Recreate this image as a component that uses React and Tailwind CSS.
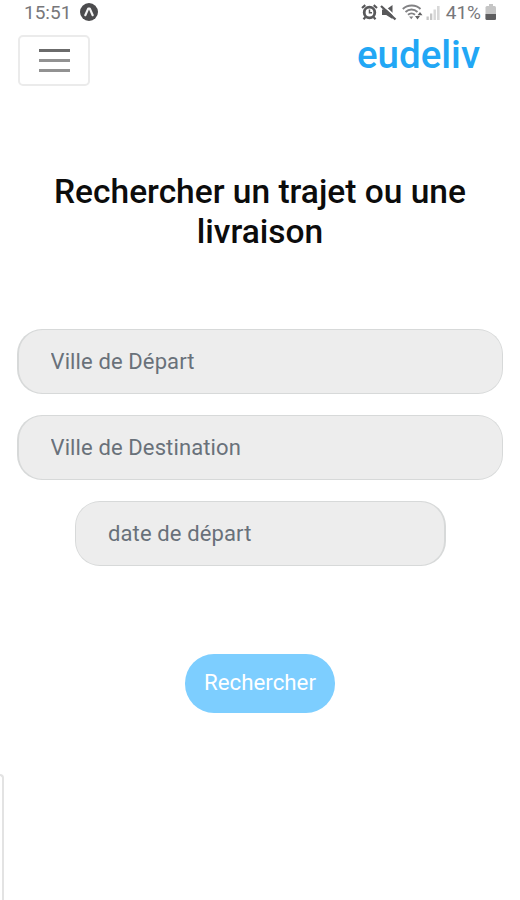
function ExpoIcon() {
  return (
    <svg width="20" height="20" viewBox="0 0 20 20" className="mb-px ml-2">
      <circle cx="10" cy="10" r="9" fill="#4b4b4d" />
      <path d="M6.3 13.2 9.2 6.6h1.6l2.9 6.6" fill="none" stroke="#f3f3f3" strokeWidth="2.2" strokeLinecap="round" strokeLinejoin="round" />
    </svg>
  );
}

function StatusIcons() {
  return (
    <svg width="82" height="18" viewBox="0 0 82 18" fill="none" className="mb-[2px]">
      <g stroke="#58585a">
        <circle cx="9.5" cy="9.5" r="5.3" strokeWidth="2.8" />
        <path d="M2 5 5.3 2.2M17 5l-3.3-2.8M5.5 14l-2 2.2M13.5 14l2 2.2" strokeWidth="2.2" />
        <path d="M9.5 6.5v3.3H12" strokeWidth="1.5" />
      </g>
      <path d="M22 6.5h4.2L32.5 2v14l-6.3-4H22z" fill="#58585a" />
      <path d="M23 2.2 37 15" stroke="#fff" strokeWidth="1.8" />
      <path d="M21 3 35.5 16.5" stroke="#58585a" strokeWidth="2.3" />
      <g stroke="#828284" strokeWidth="1.9">
        <path d="M42.8 6C47.5 1.3 56 1.3 60.5 6" />
        <path d="M45.5 9C49 5.7 54 5.7 57.5 9" />
        <path d="M48 11.8c2-1.8 5-1.8 7 0" />
      </g>
      <path d="m49 13.5 2.3 2.8 2-2.8z" fill="#828284" />
      <path d="m60 9 2.5 3.2h-5zM55 13h5l-2.5 3.4z" fill="#606062" />
      <path d="M66.5 13.5h2.3V17h-2.3zM70 10.5h2.3V17H70z" fill="#c6c6c6" />
      <path d="M73.5 6.5h2.4V17h-2.4zM77 3h2.6v14H77z" fill="#d8d8d8" />
    </svg>
  );
}

function Battery() {
  return (
    <svg width="12" height="17" viewBox="0 0 12 17" className="mb-px ml-[4px]">
      <path d="M4 0h4v2H4z" fill="#c5c5c5" />
      <rect x="0.5" y="2" width="10.5" height="14" rx="1.5" fill="#c5c5c5" />
      <path d="M.5 10H11v4.5A1.5 1.5 0 0 1 9.5 16H2A1.5 1.5 0 0 1 .5 14.5z" fill="#5d5d5f" />
    </svg>
  );
}

function Field({ label, width = "w-[486px]" }) {
  return (
    <div className={`${width} h-[65.5px] rounded-[25px] bg-[#d7d9d9] p-[1.5px]`}>
      <input
        aria-label={label}
        placeholder={label}
        className="block h-full w-full rounded-[23.5px] bg-[#ededed] px-[32px] text-[22px] tracking-[0.12px] placeholder:text-[#69717a]"
      />
    </div>
  );
}

export default function App() {
  return (
    <div className="flex h-[900px] w-[520px] flex-col overflow-hidden bg-white font-['Roboto',sans-serif]">
      <div className="flex h-[25px] items-center justify-between pr-[23px] pl-[24px] text-[19px] text-[#77777a]">
        <div className="flex items-center">
          <span className="leading-[25px]">15:51</span>
          <ExpoIcon />
        </div>
        <div className="flex items-center">
          <StatusIcons />
          <span className="ml-[4px] leading-[25px]">41%</span>
          <Battery />
        </div>
      </div>

      <header className="flex h-[62px] items-start justify-between pr-10 pl-[18px]">
        <button aria-label="Menu" className="mt-[10px] flex h-[51px] w-[72px] flex-col items-center justify-center gap-[7.5px] rounded-[5px] border-2 border-[#ebebeb]">
          <span className="h-[2.5px] w-[31px] bg-[#6b6b6b]" />
          <span className="h-[2.5px] w-[31px] bg-[#929292]" />
          <span className="h-[2.5px] w-[31px] bg-[#929292]" />
        </button>
        <span className="mt-[7px] text-[38.5px] leading-[46px] font-medium text-[#22a7f5]">eudeliv</span>
      </header>

      <h1 className="mt-[85px] text-center text-[33.5px] leading-[40px] font-medium text-[#0c0c0c]">
        Rechercher un trajet ou une
        <br />
        livraison
      </h1>

      <form className="mt-[76.5px] flex flex-col items-center gap-[20.5px]">
        <Field label="Ville de Départ" />
        <Field label="Ville de Destination" />
        <Field label="date de départ" width="w-[371px]" />
        <button type="button" className="mt-[67px] h-[59px] w-[150px] rounded-[29px] bg-[#7dceff] text-[22.3px] text-white">
          Rechercher
        </button>
      </form>

      <aside className="mt-[61px] w-1 flex-1 rounded-tr-[4px] border-t-2 border-r-2 border-[#e3e3e3]" />
    </div>
  );
}
